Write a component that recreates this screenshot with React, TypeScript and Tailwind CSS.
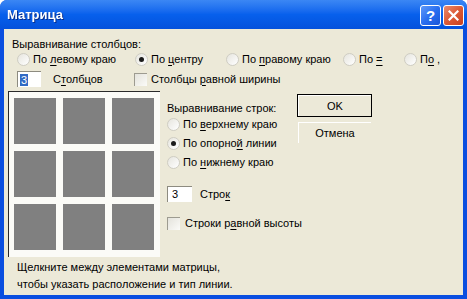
import React from 'react';

const font = { fontFamily: '"Liberation Sans", Arial, sans-serif' };

function U({ children }: { children: React.ReactNode }) {
  return <span className="underline underline-offset-[2px] decoration-1">{children}</span>;
}

function Radio({ checked }: { checked?: boolean }) {
  return (
    <span className="relative inline-flex w-[13px] h-[13px] shrink-0 rounded-full border border-[#cfcdc3] bg-gradient-to-br from-[#e6e5de] to-white items-center justify-center">
      {checked && <span className="w-[5px] h-[5px] rounded-full bg-[#1b1b1b]" />}
    </span>
  );
}

function Check() {
  return (
    <span className="inline-block w-[13px] h-[13px] shrink-0 border-t border-l border-[#9d9b90] border-r-white border-b-white bg-gradient-to-br from-[#e4e3dc] to-[#fbfbf8]" />
  );
}

function RadioItem({ checked, children, w }: { checked?: boolean; children: React.ReactNode; w: string }) {
  return (
    <div className={`flex items-center gap-[3px] ${w}`}>
      <Radio checked={checked} />
      <span>{children}</span>
    </div>
  );
}

function Button({ children, def }: { children: React.ReactNode; def?: boolean }) {
  return (
    <div className={`w-[75px] h-[23px] ${def ? 'border border-black' : 'border border-transparent'}`}>
      <div className="w-full h-full flex items-center justify-center border-t border-l border-white border-r-[#8a887e] border-b-[#8a887e] bg-[#ece9d8]">
        {children}
      </div>
    </div>
  );
}

export default function App() {
  return (
    <div className="w-[467px] h-[299px] bg-white overflow-hidden text-[11px] leading-[13px] text-black" style={font}>
      <div className="w-full h-full rounded-t-[7px] bg-[#0a4ee0] flex flex-col">
        {/* title bar */}
        <div className="h-[29px] shrink-0 rounded-t-[7px] bg-gradient-to-b from-[#3b87f4] via-[#0760ec] to-[#0451dc] flex items-center pl-[7px] pr-[3px]">
          <span className="text-white font-bold text-[13px] drop-shadow-[1px_1px_0_#0a2d8a]">Матрица</span>
          <div className="ml-auto flex gap-[2px] mt-[1px]">
            <div className="w-[21px] h-[21px] rounded-[3px] border border-white bg-gradient-to-br from-[#5d98f8] via-[#2a6ff0] to-[#1a55d8] flex items-center justify-center text-white font-bold text-[15px]">?</div>
            <div className="w-[21px] h-[21px] rounded-[3px] border border-white bg-gradient-to-br from-[#e98a6c] via-[#dc5a36] to-[#c9411e] flex items-center justify-center">
              <svg width="11" height="11" viewBox="0 0 11 11">
                <path d="M1.5 1.5 L9.5 9.5 M9.5 1.5 L1.5 9.5" stroke="white" strokeWidth="2.2" strokeLinecap="square" />
              </svg>
            </div>
          </div>
        </div>

        {/* body */}
        <div className="flex-1 mx-[4px] mb-[4px] bg-[#ece9d8] flex flex-col">
          <div className="mt-[9px] ml-[8px] h-[13px]">Выравнивание столбцов:</div>

          <div className="ml-[13px] mt-[1px] h-[14px] flex items-center">
            <RadioItem w="w-[118px]">По <U>л</U>евому краю</RadioItem>
            <RadioItem w="w-[91px]" checked>По <U>ц</U>ентру</RadioItem>
            <RadioItem w="w-[117px]">По <U>п</U>равому краю</RadioItem>
            <RadioItem w="w-[61px]">По <U>=</U></RadioItem>
            <RadioItem w="w-[50px]">П<U>о</U> ,</RadioItem>
          </div>

          <div className="ml-[13px] mt-[5px] h-[16px] flex items-center">
            <div className="w-[24px] h-[16px] bg-white border-t border-l border-[#8d8b80] border-r-[#f4f3ee] border-b-[#f4f3ee] flex items-center pl-[2px]">
              <span className="bg-[#316ac5] text-white px-[1px] leading-[12px]">3</span>
            </div>
            <span className="ml-[12px] w-[81px]">С<U>т</U>олбцов</span>
            <Check />
            <span className="ml-[4px]">Столбцы <U>р</U>авной ширины</span>
          </div>

          <div className="mt-[4px] flex">
            {/* matrix */}
            <div className="ml-[4px] w-[152px] h-[166px] border-t border-l border-[#2a2a2a] border-r-[#9a9a9a] border-b-[#9a9a9a] bg-[#fbfbf7] grid grid-cols-[42px_42px_42px] grid-rows-[46px_46px_46px] gap-[7px] pl-[5px] pt-[6px]">
              {Array.from({ length: 9 }).map((_, i) => (
                <div key={i} className="bg-[#808080]" />
              ))}
            </div>

            {/* row alignment */}
            <div className="ml-[7px] w-[130px] flex flex-col">
              <div className="mt-[11px] h-[13px]">Выравнивание строк:</div>
              <div className="h-[19px] flex items-center"><Radio /><span className="ml-[3px]">По <U>в</U>ерхнему краю</span></div>
              <div className="h-[19px] flex items-center"><Radio checked /><span className="ml-[3px]">По опорно<U>й</U> линии</span></div>
              <div className="h-[19px] flex items-center"><Radio /><span className="ml-[3px]">По <U>н</U>ижнему краю</span></div>
              <div className="mt-[14px] h-[16px] flex items-center">
                <div className="w-[25px] h-[16px] bg-white border-t border-l border-[#8d8b80] border-r-[#f4f3ee] border-b-[#f4f3ee] flex items-center pl-[4px]">3</div>
                <span className="ml-[8px]">Стро<U>к</U></span>
              </div>
              <div className="mt-[13px] h-[16px] flex items-center">
                <Check />
                <span className="ml-[5px] whitespace-nowrap">Строки р<U>а</U>вной высоты</span>
              </div>
            </div>

            {/* buttons */}
            <div className="flex flex-col gap-[4px] pt-[3px]">
              <Button def>OK</Button>
              <Button>Отмена</Button>
            </div>
          </div>

          <div className="mt-[2px] ml-[13px] leading-[17px]">
            <div>Щелкните между элементами матрицы,</div>
            <div>чтобы указать расположение и тип линии.</div>
          </div>
        </div>
      </div>
    </div>
  );
}
